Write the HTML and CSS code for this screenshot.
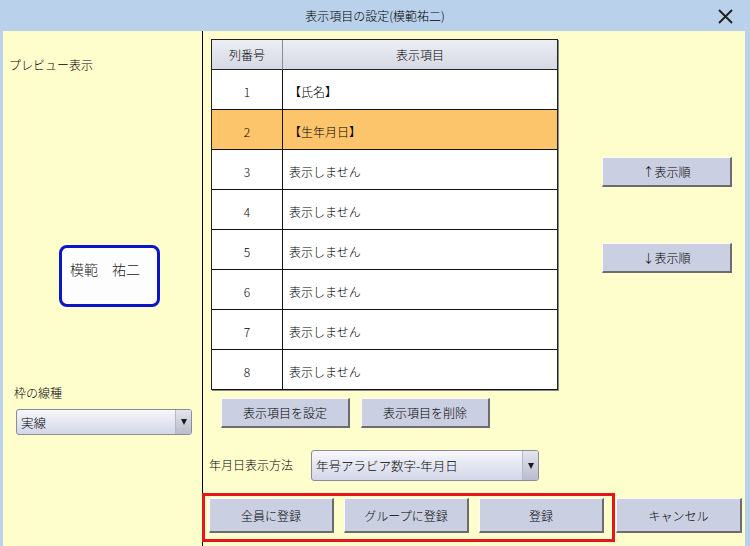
FILE: index.html
```html
<!DOCTYPE html>
<html lang="ja">
<head>
<meta charset="utf-8">
<title>表示項目の設定</title>
<link rel="stylesheet" href="styles.css">
</head>
<body>
<div class="window">
  <div class="titlebar">
    <span></span>
    <span class="title">表示項目の設定(模範祐二)</span>
    <span class="close">
      <svg width="15" height="15" viewBox="0 0 15 15"><path d="M1 1 L14 14 M14 1 L1 14" stroke="#1e1e1e" stroke-width="1.8" fill="none"/></svg>
    </span>
  </div>
  <div class="content">
    <div class="left">
      <div class="lbl preview-lbl">プレビュー表示</div>
      <div class="preview"><span>模範　祐二</span></div>
      <div class="lbl frame-lbl">枠の線種</div>
      <div class="select frame-select"><span class="sel-text">実線</span><span class="sel-arrow"><i></i></span></div>
    </div>
    <div class="right">
      <div class="upper">
        <div class="table-col">
          <div class="grid">
            <div class="cell head">列番号</div><div class="cell head last-col">表示項目</div>
            <div class="cell num">1</div><div class="cell item last-col">【氏名】</div>
            <div class="cell num sel">2</div><div class="cell item last-col sel">【生年月日】</div>
            <div class="cell num">3</div><div class="cell item last-col">表示しません</div>
            <div class="cell num">4</div><div class="cell item last-col">表示しません</div>
            <div class="cell num">5</div><div class="cell item last-col">表示しません</div>
            <div class="cell num">6</div><div class="cell item last-col">表示しません</div>
            <div class="cell num">7</div><div class="cell item last-col">表示しません</div>
            <div class="cell num last-row">8</div><div class="cell item last-col last-row">表示しません</div>
          </div>
          <div class="table-actions">
            <button class="btn act">表示項目を設定</button>
            <button class="btn act">表示項目を削除</button>
          </div>
        </div>
        <div class="order-col">
          <button class="btn order up">↑表示順</button>
          <button class="btn order down">↓表示順</button>
        </div>
      </div>
      <div class="date-row">
        <span class="date-lbl">年月日表示方法</span>
        <div class="select date-select"><span class="sel-text">年号アラビア数字-年月日</span><span class="sel-arrow"><i></i></span></div>
      </div>
      <div class="bottom-row">
        <div class="highlight">
          <button class="btn big">全員に登録</button>
          <button class="btn big">グループに登録</button>
          <button class="btn big">登録</button>
        </div>
        <button class="btn big cancel">キャンセル</button>
      </div>
    </div>
  </div>
</div>
</body>
</html>
```

FILE: styles.css
```css
* { box-sizing: border-box; }
html, body { margin: 0; padding: 0; }
body {
  font-family: "Noto Sans CJK JP", "Noto Sans", sans-serif;
  font-size: 12px;
  font-weight: 300;
  color: #000;
  background: #b9d1ea;
}
.window {
  width: 750px;
  height: 546px;
  overflow: hidden;
  display: flex;
  flex-direction: column;
  background: #b9d1ea;
}
.titlebar {
  height: 31px;
  flex: none;
  display: grid;
  grid-template-columns: 1fr auto 1fr;
  align-items: center;
}
.title {
  font-size: 12px;
  color: #000;
  line-height: 16px;
  padding-top: 1px;
}
.close {
  justify-self: end;
  margin-right: 17px;
  height: 15px;
  margin-top: 2px;
}
.close svg { display: block; }
.content {
  flex: 1;
  display: flex;
  margin: 0 5px 0 3px;
  background: #fefecd;
}
.left {
  width: 200px;
  flex: none;
  border-right: 1px solid #000;
  display: flex;
  flex-direction: column;
  align-items: flex-start;
}
.lbl { line-height: 16px; font-size: 12px; }
.preview-lbl { margin: 26px 0 0 6px; }
.preview {
  margin: 172px 0 0 56px;
  width: 101px;
  height: 62px;
  border: 3px solid #0a14c8;
  border-radius: 8px;
  background: #fdfdfd;
  padding: 12px 0 0 8px;
  font-size: 14px;
  line-height: 18px;
  color: #222;
}
.frame-lbl { margin: 78px 0 0 11px; }
.select {
  display: flex;
  border: 1px solid #8c8c96;
  border-radius: 3px;
  background: linear-gradient(#f8f8fb, #e6e8f2 45%, #d2d6e8);
  overflow: hidden;
}
.sel-text {
  flex: 1;
  display: flex;
  align-items: center;
  padding-left: 4px;
  font-size: 12.5px;
  color: #000;
}
.sel-arrow {
  width: 16px;
  flex: none;
  display: flex;
  align-items: center;
  justify-content: center;
  border-left: 1px solid #b4b8c8;
  background: linear-gradient(#e4e6ee, #b8bccc);
}
.sel-arrow i {
  width: 0; height: 0;
  border-left: 3.5px solid transparent;
  border-right: 3.5px solid transparent;
  border-top: 6px solid #1a1a1a;
}
.frame-select {
  margin: 8px 0 0 13px;
  width: 176px;
  height: 26px;
}
.right {
  flex: 1;
  display: flex;
  flex-direction: column;
}
.upper { display: flex; }
.table-col {
  margin: 8px 0 0 8px;
  display: flex;
  flex-direction: column;
}
.grid {
  display: grid;
  grid-template-columns: 71px 274px;
  grid-template-rows: 30px repeat(8, 40px);
  border: 1px solid #222;
  border-bottom: 0;
  background: #fff;
  box-shadow: 1px 1px 0 #8a8a8a;
}
.cell {
  border-right: 1px solid #111;
  border-bottom: 1px solid #111;
  display: flex;
  align-items: center;
  font-size: 12px;
  color: #000;
}
.cell.last-col { border-right: 0; }
.cell.head {
  justify-content: center;
  background: linear-gradient(#eceef4, #d6d8e4);
  border-bottom: 1px solid #222;
  border-right-color: #8a8a94;
}
.cell.head.last-col { border-right: 0; }
.cell.num { justify-content: center; padding-top: 3px; }
.cell.item { padding: 3px 0 0 6px; }
.cell.sel { background: #fcc56c; }
.table-actions {
  display: flex;
  gap: 11px;
  margin: 8px 0 0 10px;
}
.btn {
  font-family: inherit;
  font-size: 12px;
  font-weight: 300;
  color: #000;
  background: #cbcfe2;
  border: 0;
  border-top: 1px solid #fafaff;
  border-left: 1px solid #fafaff;
  border-right: 2px solid #6c6c70;
  border-bottom: 2px solid #6c6c70;
  padding: 0;
  margin: 0;
  display: flex;
  align-items: center;
  justify-content: center;
}
.btn.act { width: 129px; height: 30px; }
.order-col {
  margin-left: 44px;
  display: flex;
  flex-direction: column;
}
.btn.order { width: 130px; height: 30px; }
.btn.up { margin-top: 126px; }
.btn.down { margin-top: 56px; }
.date-row {
  display: flex;
  align-items: center;
  margin: 22px 0 0 6px;
}
.date-lbl { width: 102px; padding-bottom: 2px; }
.date-select { width: 228px; height: 31px; }
.date-select .sel-arrow { width: 16px; }
.bottom-row {
  display: flex;
  align-items: flex-start;
  margin: 12px 0 0 -1px;
}
.highlight {
  display: flex;
  gap: 10px;
  border: 3px solid #e8141c;
  padding: 2px 8px 6px 4px;
}
.btn.big { width: 125px; height: 35px; }
.btn.cancel { margin: 5px 0 0 1px; width: 126px; }
```
